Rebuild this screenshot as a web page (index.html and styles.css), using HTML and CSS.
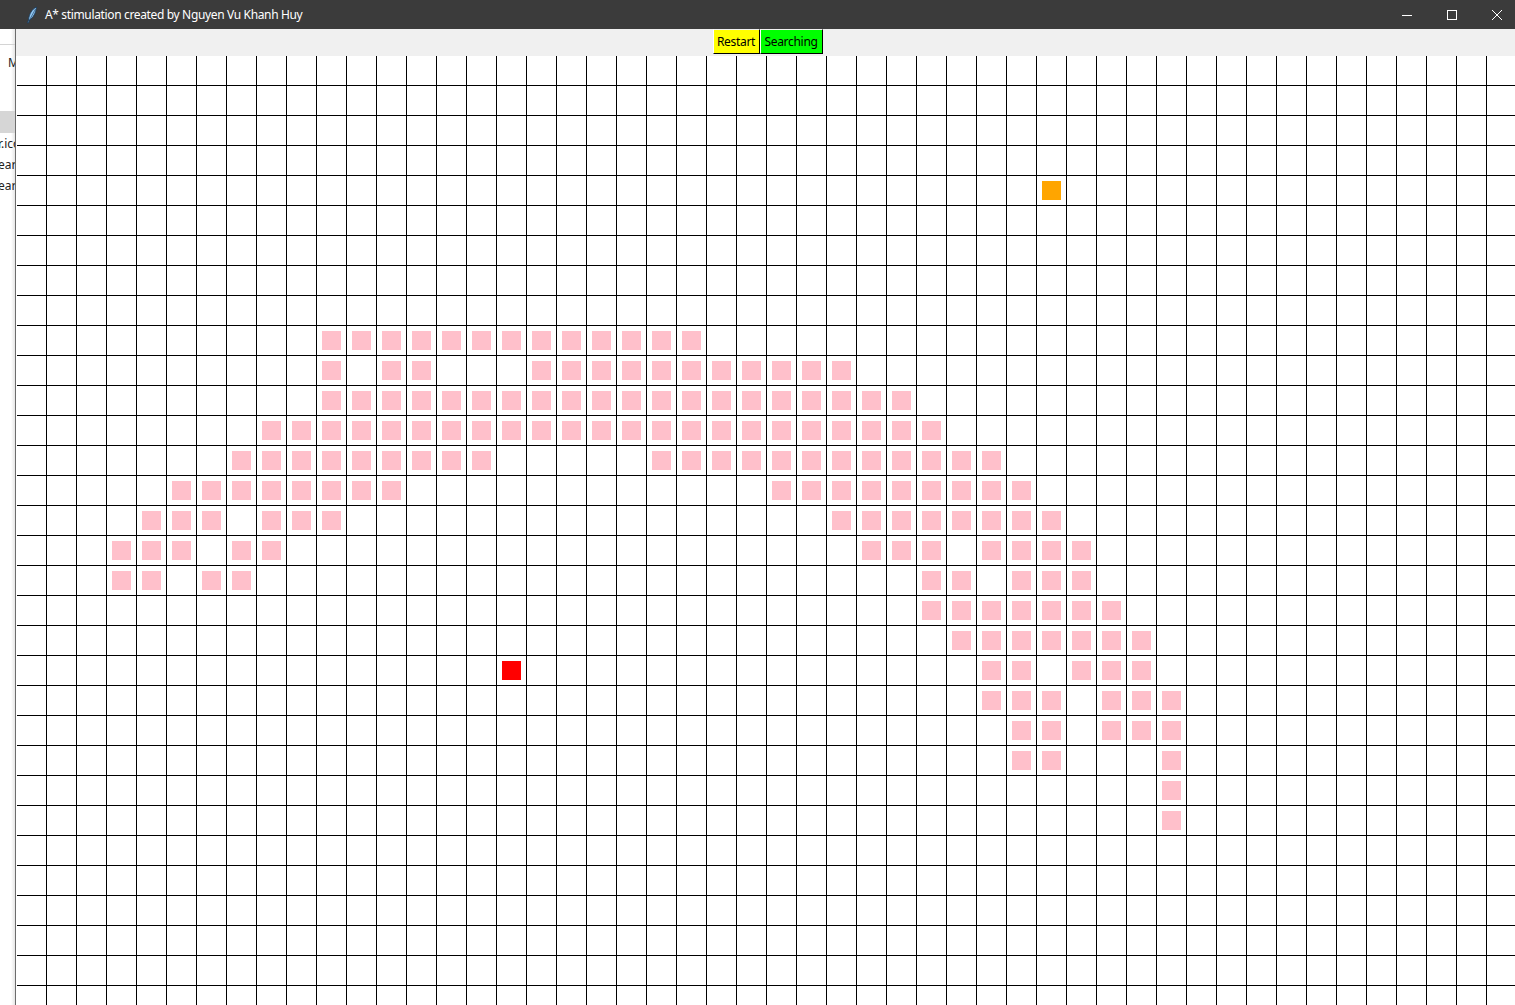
FILE: index.html
```html
<!DOCTYPE html>
<html>
<head>
<meta charset="utf-8">
<title>A* stimulation</title>
<link rel="stylesheet" href="styles.css">
</head>
<body>
<div class="titlebar">
  <svg class="app-icon" width="12" height="18" viewBox="0 0 12 18">
    <path d="M10.5 1 C6 3 3 8 2.5 14 L1.5 17 L2.5 17 L3.5 14 C7 12 10 7 10.5 1 Z" fill="#8ec6f2" stroke="#1d3b5a" stroke-width="0.9"/>
    <path d="M9.5 3 L3 15" stroke="#1d3b5a" stroke-width="0.6"/>
  </svg>
  <span class="title">A* stimulation created by Nguyen Vu Khanh Huy</span>
  <div class="controls">
    <div class="ctl"><svg width="12" height="12" viewBox="0 0 12 12"><path d="M1 6.5 H11" stroke="#fff" stroke-width="1"/></svg></div>
    <div class="ctl"><svg width="12" height="12" viewBox="0 0 12 12"><rect x="1.5" y="1.5" width="9" height="9" fill="none" stroke="#fff" stroke-width="1"/></svg></div>
    <div class="ctl"><svg width="12" height="12" viewBox="0 0 12 12"><path d="M1 1 L11 11 M11 1 L1 11" stroke="#fff" stroke-width="1"/></svg></div>
  </div>
</div>
<div class="main">
  <div class="bgwin">
    <div class="bg-gap"></div>
    <div class="bg-rule"></div>
    <div class="bg-m">M</div>
    <div class="bg-band"></div>
    <div class="bg-line bg-first">r.ico</div>
    <div class="bg-line">ear</div>
    <div class="bg-line">ear</div>
  </div>
  <div class="window">
    <div class="toolbar">
      <button class="btn btn-restart">Restart</button>
      <button class="btn btn-search">Searching</button>
    </div>
    <div class="canvas">
      <div class="grid" id="grid"></div>
    </div>
  </div>
</div>
<script src="script.js"></script>
</body>
</html>
```

FILE: styles.css
```css
html, body {
  margin: 0;
  padding: 0;
}
body {
  width: 1515px;
  height: 1005px;
  overflow: hidden;
  font-family: "Noto Sans", "Open Sans", sans-serif;
  background: #fff;
}
.titlebar {
  height: 29px;
  background: #3b3b3b;
  display: flex;
  align-items: center;
  color: #fff;
}
.app-icon {
  margin-left: 26px;
  flex: none;
}
.title {
  margin-left: 7px;
  font-size: 12px;
  letter-spacing: -0.35px;
  white-space: nowrap;
}
.controls {
  margin-left: auto;
  margin-right: -4px;
  display: flex;
}
.ctl {
  width: 45px;
  height: 29px;
  display: flex;
  align-items: center;
  justify-content: center;
}
.main {
  display: flex;
  height: 976px;
}
.bgwin {
  width: 15px;
  flex: none;
  background: linear-gradient(to right, #fff 0, #fff 11px, #e6e6e6 15px);
  overflow: hidden;
  font-size: 12px;
  color: #222;
  display: flex;
  flex-direction: column;
}
.bg-gap { height: 15px; }
.bg-rule { height: 1px; background: #d4d4d4; }
.bg-m {
  margin-top: 10px;
  padding-left: 8px;
  line-height: 16px;
  height: 20px;
}
.bg-band {
  margin-top: 36px;
  height: 22px;
  background: #d6d6d6;
}
.bg-line {
  margin-left: -2px;
  line-height: 21px;
  height: 21px;
  white-space: nowrap;
}
.bg-first { margin-top: 0; }
.window {
  flex: 1;
  display: flex;
  flex-direction: column;
  border-left: 1px solid #6c6c6c;
  min-width: 0;
}
.toolbar {
  height: 27px;
  background: #f0f0f0;
  display: flex;
  justify-content: center;
  align-items: flex-start;
  padding-left: 4px;
  flex: none;
}
.btn {
  height: 25px;
  margin: 0;
  padding: 0;
  border: 1px solid #000;
  border-top-color: #f0f0f0;
  border-left-color: #fff;
  font-family: "Noto Sans", sans-serif;
  font-size: 12px;
  letter-spacing: -0.3px;
  color: #000;
  display: flex;
  align-items: center;
  justify-content: center;
}
.btn-restart {
  width: 47px;
  background: #ffff00;
}
.btn-search {
  width: 63px;
  background: #00ff00;
}
.canvas {
  flex: 1;
  background: #fff;
  padding-left: 1px;
  overflow: hidden;
}
.grid {
  width: 1500px;
  height: 960px;
  display: grid;
  grid-template-columns: repeat(50, 30px);
  grid-template-rows: repeat(32, 30px);
  background-image:
    linear-gradient(to left, #000 1px, transparent 1px),
    linear-gradient(to top, #000 1px, transparent 1px);
  background-size: 30px 30px;
}
.mark {
  margin: 5px 0 0 5px;
  width: 19px;
  height: 19px;
  background: #ffc0cb;
}
.mark.goal { background: #ffa500; }
.mark.start { background: #ff0000; }
```

FILE: script.js
```js
(function () {
  // row -> list of columns or [from, to] ranges
  var visited = {
    9: [[10, 22]],
    10: [10, 12, 13, [17, 27]],
    11: [[10, 29]],
    12: [[8, 30]],
    13: [[7, 15], [21, 32]],
    14: [[5, 12], [25, 33]],
    15: [4, 5, 6, 8, 9, 10, [27, 34]],
    16: [3, 4, 5, 7, 8, 28, 29, 30, 32, 33, 34, 35],
    17: [3, 4, 6, 7, 30, 31, 33, 34, 35],
    18: [[30, 36]],
    19: [[31, 37]],
    20: [32, 33, 35, 36, 37],
    21: [32, 33, 34, 36, 37, 38],
    22: [33, 34, 36, 37, 38],
    23: [33, 34, 38],
    24: [38],
    25: [38]
  };
  var grid = document.getElementById('grid');
  function add(r, c, cls) {
    var el = document.createElement('i');
    el.className = 'mark' + (cls ? ' ' + cls : '');
    el.style.gridArea = (r + 1) + ' / ' + (c + 1);
    grid.appendChild(el);
  }
  Object.keys(visited).forEach(function (k) {
    var r = parseInt(k, 10);
    visited[k].forEach(function (item) {
      if (Array.isArray(item)) {
        for (var c = item[0]; c <= item[1]; c++) add(r, c);
      } else {
        add(r, item);
      }
    });
  });
  add(4, 34, 'goal');
  add(20, 16, 'start');
})();
```
